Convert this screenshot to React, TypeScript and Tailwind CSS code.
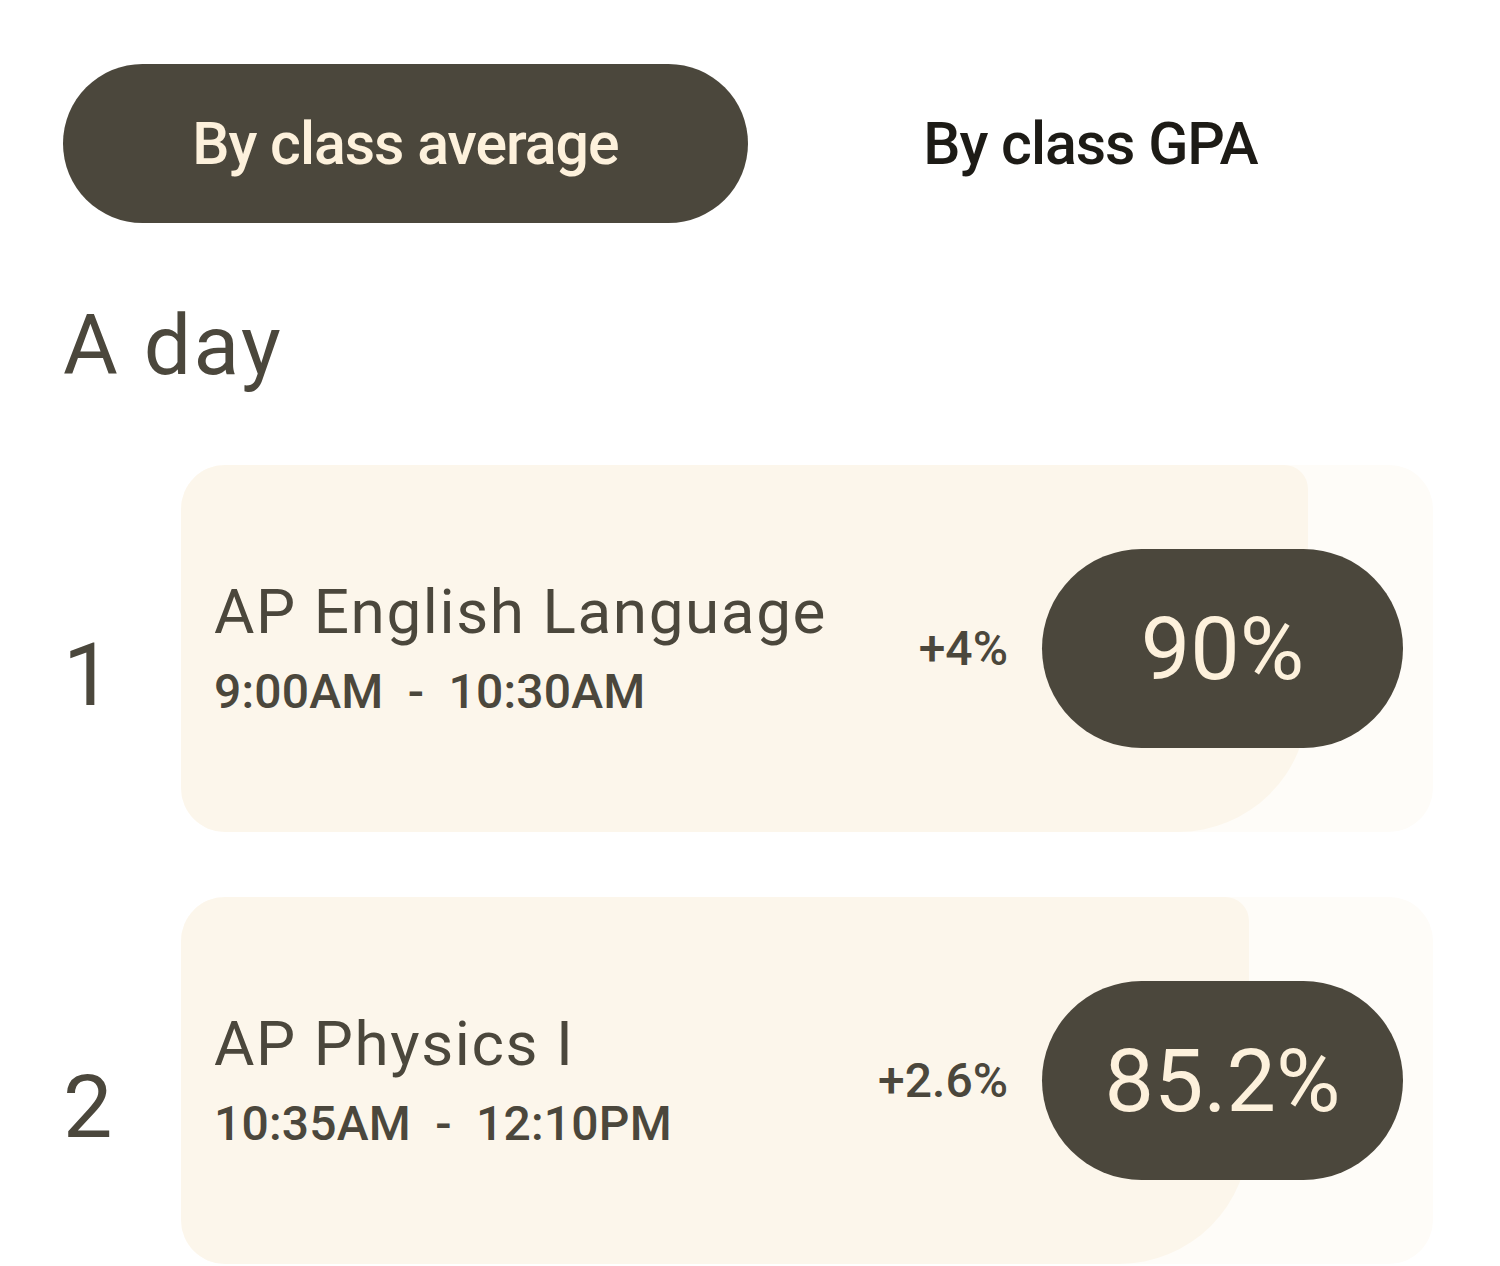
import React from 'react';

type Item = { n: number; title: string; time: [string, string]; delta: string; value: string; pct: number };

const items: Item[] = [
  { n: 1, title: 'AP English Language', time: ['9:00AM', '10:30AM'], delta: '+4%', value: '90%', pct: 90 },
  { n: 2, title: 'AP Physics I', time: ['10:35AM', '12:10PM'], delta: '+2.6%', value: '85.2%', pct: 85.3 },
];

function Row({ item }: { item: Item }) {
  return (
    <div className="flex">
      <div className="w-[118px] shrink-0 flex items-center">
        <span className="mt-[52px] text-[88px] leading-none text-[#4B473C]">{item.n}</span>
      </div>
      <div className="flex-1 grid h-[367px] rounded-[44px] overflow-hidden bg-[#FEFCF8]">
        <div
          className="col-start-1 row-start-1 h-full bg-[#FCF6EB] rounded-tr-[24px] rounded-br-[130px]"
          style={{ width: `${item.pct}%` }}
        />
        <div className="col-start-1 row-start-1 flex items-center pl-[33px] pr-[30px]">
          <div className="flex-1 flex flex-col">
            <span className="text-[62px] leading-none tracking-[1.6px] text-[#4B473C]">{item.title}</span>
            <span className="mt-[25px] text-[48px] leading-none tracking-[0.2px] font-medium text-[#4B473C] whitespace-pre">
              {item.time[0]}{'  -  '}{item.time[1]}
            </span>
          </div>
          <span className="mr-[34px] text-[48px] leading-none font-medium text-[#4B473C]">{item.delta}</span>
          <div className="w-[361px] h-[199px] rounded-full bg-[#4B473C] flex items-center justify-center">
            <span className="text-[88px] leading-none text-[#FDF1DC]">{item.value}</span>
          </div>
        </div>
      </div>
    </div>
  );
}

export default function App() {
  return (
    <div className="w-[1500px] min-h-[1266px] bg-white pl-[63px] pr-[67px] pt-[64px] font-['Roboto',sans-serif]">
      <div className="grid grid-cols-2 h-[159px]">
        <div className="rounded-full bg-[#4B473C] flex items-center justify-center">
          <span className="text-[59px] font-medium tracking-[-1px] text-[#FDF1DC] leading-none">By class average</span>
        </div>
        <div className="flex items-center justify-center">
          <span className="text-[59px] font-medium tracking-[-1px] text-[#1D1B16] leading-none">By class GPA</span>
        </div>
      </div>
      <div className="mt-[81px] text-[84px] leading-none tracking-[2.5px] text-[#4B473C]">A day</div>
      <div className="mt-[77px] flex flex-col gap-[65px]">
        {items.map((it) => (
          <Row key={it.n} item={it} />
        ))}
      </div>
    </div>
  );
}
